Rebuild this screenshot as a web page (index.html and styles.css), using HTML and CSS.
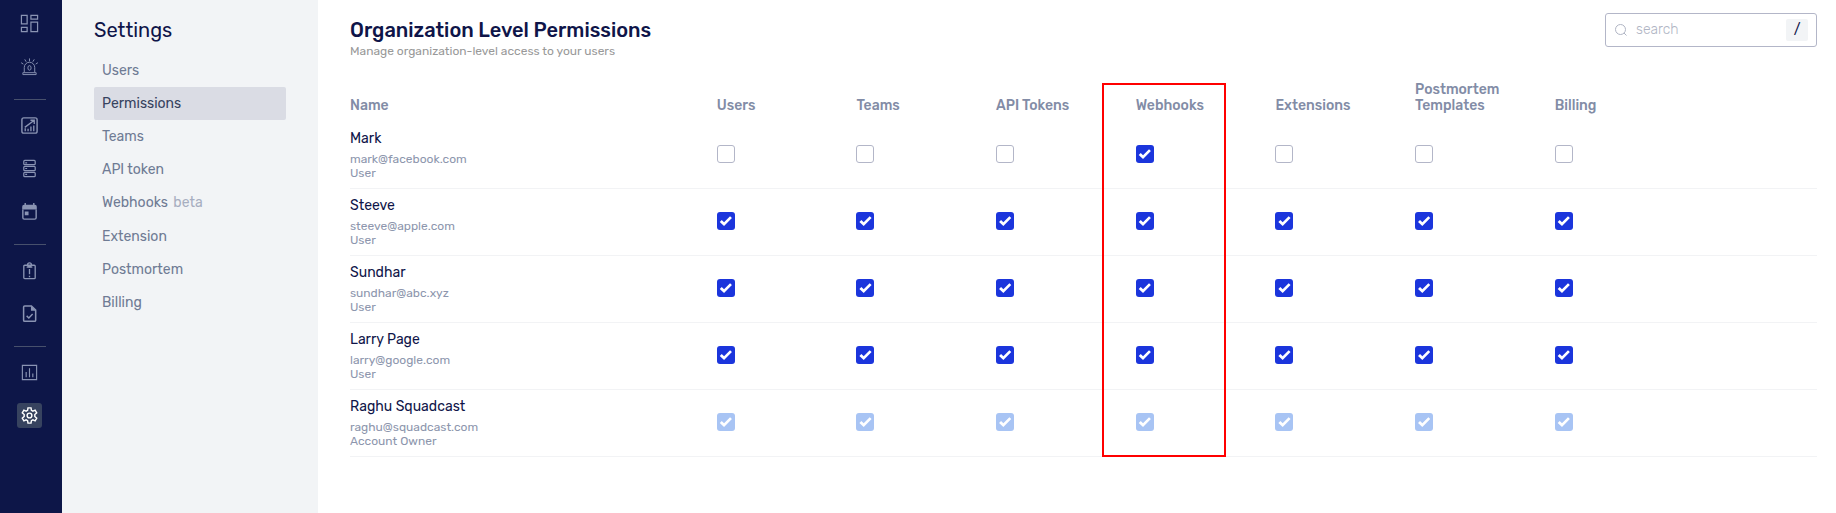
FILE: index.html
```html
<!DOCTYPE html>
<html lang="en">
<head>
<meta charset="utf-8">
<title>Organization Level Permissions</title>
<link rel="stylesheet" href="styles.css">
</head>
<body>
<div class="app">
  <nav class="rail" aria-label="Main">
    <a class="rail-link" href="#dashboard" aria-label="Dashboard"><svg class="icon" viewBox="0 0 20 20"><path d="M1.500 1.500h6v9h-6zM11.500 1.500h7v4h-7zM11.500 8.500h7v10h-7zM1.500 14h6v4.500h-6z" stroke-width="1.300"/></svg></a>
    <a class="rail-link" href="#incidents" aria-label="Incidents"><svg class="icon" viewBox="0 0 20 20"><path d="M4.500 16v-5a5.500 5.500 0 0 1 11 0v5M3 16.500h14v2H3zM10 4.500V1.500M6.500 5L5 2.500M13.500 5L15 2.500M3.500 7.500L1.200 6M16.500 7.500L18.800 6"/><ellipse cx="10" cy="11.500" rx="1.700" ry="2.400"/></svg></a>
    <hr class="rail-line">
    <a class="rail-link" href="#analytics" aria-label="Analytics"><svg class="icon" viewBox="0 0 20 20"><rect x="2" y="2" width="16" height="16" rx="2" stroke-width="1.500"/><path d="M5 12L15 4.500M11 4.500h4v4M5.500 13v3M8.500 13.500V16M11.500 11v5M14.500 10v6" stroke-width="1.400"/></svg></a>
    <a class="rail-link" href="#services" aria-label="Services"><svg class="icon" viewBox="0 0 20 20"><g stroke-width="1.300"><rect x="4" y="1.500" width="12" height="4.500" rx="1"/><rect x="4" y="7.700" width="12" height="4.500" rx="1"/><rect x="4" y="14" width="12" height="4.500" rx="1"/><path d="M5.500 4h2M5.500 10h2M5.500 16.300h2"/></g></svg></a>
    <a class="rail-link" href="#schedules" aria-label="Schedules"><svg class="icon" viewBox="0 0 20 20"><path d="M5.500 1v4M14.500 1v4M3 8v8.500a1.500 1.500 0 0 0 1.500 1.500h11a1.500 1.500 0 0 0 1.500-1.500V8" stroke-width="1.500"/><path class="solid" d="M2.300 5a2 2 0 0 1 2-2h11.400a2 2 0 0 1 2 2v3H2.300zM5 10h4v4H5z"/></svg></a>
    <hr class="rail-line">
    <a class="rail-link" href="#escalations" aria-label="Escalation policies"><svg class="icon" viewBox="0 0 20 20"><rect x="4" y="4.500" width="12" height="14" rx="1" stroke-width="1.400"/><circle cx="10" cy="4" r="2" stroke-width="1.500"/><path d="M7 6.500h6M10 8.500v5.500M10 15.500v1.500" stroke-width="1.400"/></svg></a>
    <a class="rail-link" href="#postmortems" aria-label="Postmortems"><svg class="icon" viewBox="0 0 20 20"><path d="M5 2h7l4.500 4.500v10.500a1.200 1.200 0 0 1-1.200 1.200H5A1.200 1.200 0 0 1 3.800 17V3.200A1.200 1.200 0 0 1 5 2z" stroke-width="1.600"/><path d="M7 12.500l2.300 2.300 4-4.300" stroke-width="1.500"/><path class="solid" d="M11.500 2v5h5z"/></svg></a>
    <hr class="rail-line">
    <a class="rail-link" href="#status" aria-label="Reports"><svg class="icon" viewBox="0 0 20 20"><path d="M2.500 2.500h15v15h-15zM6.500 15V9.500M10 15V5.500M13.500 15v-4" stroke-width="1.200"/></svg></a>
    <a class="rail-link rail-link-active" href="#settings" aria-label="Settings"><svg class="icon" viewBox="0 0 20 20"><path d="M8.400 2h3.200l.4 2.500 1.600.9 2.300-1 1.700 2.800-2 1.700v2.200l2 1.700-1.700 2.800-2.300-1-1.600.9-.4 2.500H8.400L8 15.500l-1.600-.9-2.300 1-1.700-2.800 2-1.700V8.900l-2-1.700 1.700-2.800 2.300 1L8 4.500z" stroke-width="1.500"/><circle cx="10" cy="10" r="2.500" stroke-width="1.500"/></svg></a>
  </nav>

  <aside class="side">
    <h2 class="side-title">Settings</h2>
    <nav class="menu" aria-label="Settings">
      <a class="menu-item" href="#users">Users</a>
      <a class="menu-item menu-item-active" href="#permissions" aria-current="page">Permissions</a>
      <a class="menu-item" href="#teams">Teams</a>
      <a class="menu-item" href="#api-token">API token</a>
      <a class="menu-item menu-item-tagged" href="#webhooks">Webhooks <span class="beta">beta</span></a>
      <a class="menu-item" href="#extension">Extension</a>
      <a class="menu-item" href="#postmortem">Postmortem</a>
      <a class="menu-item" href="#billing">Billing</a>
    </nav>
  </aside>

  <main class="main">
    <header class="head">
      <div class="head-text">
        <h1 class="title">Organization Level Permissions</h1>
        <p class="subtitle">Manage organization-level access to your users</p>
      </div>
      <label class="search">
        <svg class="search-icon" viewBox="0 0 14 14"><circle cx="6.500" cy="6.500" r="5"/><path d="M10 10L12.500 12.500"/></svg>
        <input class="search-input" type="search" placeholder="search" aria-label="Search">
        <kbd class="key">/</kbd>
      </label>
    </header>

    <div class="table-wrap">
      <table class="table">
        <colgroup><col class="col-name"><col class="col-perm" span="7"><col></colgroup>
        <thead>
          <tr><th scope="col">Name</th><th scope="col">Users</th><th scope="col">Teams</th><th scope="col">API Tokens</th><th scope="col">Webhooks</th><th scope="col">Extensions</th><th scope="col">Postmortem Templates</th><th scope="col">Billing</th><td></td></tr>
        </thead>
        <tbody>
          <tr>
            <td><div class="name">Mark</div><div class="meta">mark@facebook.com</div><div class="meta">User</div></td>
            <td><input class="check" type="checkbox" aria-label="Mark: Users"></td>
            <td><input class="check" type="checkbox" aria-label="Mark: Teams"></td>
            <td><input class="check" type="checkbox" aria-label="Mark: API Tokens"></td>
            <td><input class="check" type="checkbox" aria-label="Mark: Webhooks" checked></td>
            <td><input class="check" type="checkbox" aria-label="Mark: Extensions"></td>
            <td><input class="check" type="checkbox" aria-label="Mark: Postmortem Templates"></td>
            <td><input class="check" type="checkbox" aria-label="Mark: Billing"></td>
            <td></td>
          </tr>
          <tr>
            <td><div class="name">Steeve</div><div class="meta">steeve@apple.com</div><div class="meta">User</div></td>
            <td><input class="check" type="checkbox" aria-label="Steeve: Users" checked></td>
            <td><input class="check" type="checkbox" aria-label="Steeve: Teams" checked></td>
            <td><input class="check" type="checkbox" aria-label="Steeve: API Tokens" checked></td>
            <td><input class="check" type="checkbox" aria-label="Steeve: Webhooks" checked></td>
            <td><input class="check" type="checkbox" aria-label="Steeve: Extensions" checked></td>
            <td><input class="check" type="checkbox" aria-label="Steeve: Postmortem Templates" checked></td>
            <td><input class="check" type="checkbox" aria-label="Steeve: Billing" checked></td>
            <td></td>
          </tr>
          <tr>
            <td><div class="name">Sundhar</div><div class="meta">sundhar@abc.xyz</div><div class="meta">User</div></td>
            <td><input class="check" type="checkbox" aria-label="Sundhar: Users" checked></td>
            <td><input class="check" type="checkbox" aria-label="Sundhar: Teams" checked></td>
            <td><input class="check" type="checkbox" aria-label="Sundhar: API Tokens" checked></td>
            <td><input class="check" type="checkbox" aria-label="Sundhar: Webhooks" checked></td>
            <td><input class="check" type="checkbox" aria-label="Sundhar: Extensions" checked></td>
            <td><input class="check" type="checkbox" aria-label="Sundhar: Postmortem Templates" checked></td>
            <td><input class="check" type="checkbox" aria-label="Sundhar: Billing" checked></td>
            <td></td>
          </tr>
          <tr>
            <td><div class="name">Larry Page</div><div class="meta">larry@google.com</div><div class="meta">User</div></td>
            <td><input class="check" type="checkbox" aria-label="Larry Page: Users" checked></td>
            <td><input class="check" type="checkbox" aria-label="Larry Page: Teams" checked></td>
            <td><input class="check" type="checkbox" aria-label="Larry Page: API Tokens" checked></td>
            <td><input class="check" type="checkbox" aria-label="Larry Page: Webhooks" checked></td>
            <td><input class="check" type="checkbox" aria-label="Larry Page: Extensions" checked></td>
            <td><input class="check" type="checkbox" aria-label="Larry Page: Postmortem Templates" checked></td>
            <td><input class="check" type="checkbox" aria-label="Larry Page: Billing" checked></td>
            <td></td>
          </tr>
          <tr>
            <td><div class="name">Raghu Squadcast</div><div class="meta">raghu@squadcast.com</div><div class="meta">Account Owner</div></td>
            <td><input class="check" type="checkbox" aria-label="Raghu Squadcast: Users" checked disabled></td>
            <td><input class="check" type="checkbox" aria-label="Raghu Squadcast: Teams" checked disabled></td>
            <td><input class="check" type="checkbox" aria-label="Raghu Squadcast: API Tokens" checked disabled></td>
            <td><input class="check" type="checkbox" aria-label="Raghu Squadcast: Webhooks" checked disabled></td>
            <td><input class="check" type="checkbox" aria-label="Raghu Squadcast: Extensions" checked disabled></td>
            <td><input class="check" type="checkbox" aria-label="Raghu Squadcast: Postmortem Templates" checked disabled></td>
            <td><input class="check" type="checkbox" aria-label="Raghu Squadcast: Billing" checked disabled></td>
            <td></td>
          </tr>
        </tbody>
      </table>
      <div class="highlight"></div>
    </div>
  </main>
</div>
</body>
</html>
```
FILE: styles.css
```css
* { box-sizing: border-box; }

body {
  margin: 0;
  background: #fff;
  color: #0f1549;
  font-family: Rubik, Roboto, "Liberation Sans", sans-serif;
  font-size: 14px;
}

a { text-decoration: none; }

.app { display: flex; min-height: 100vh; }

/* Icon rail */
.rail {
  flex: none;
  width: 62px;
  padding: 11px 3px 0 0;
  display: flex;
  flex-direction: column;
  align-items: center;
  gap: 18px;
  background: #0d1648;
}
.rail-link {
  width: 25px;
  height: 25px;
  display: flex;
  align-items: center;
  justify-content: center;
  border-radius: 3px;
  color: #8a94b3;
}
.rail-link-active { background: #37435f; color: #fff; }
.rail-line {
  width: 32px;
  height: 1px;
  margin: 2px 0 -5px;
  border: 0;
  background: #47506c;
}
.icon { width: 19px; height: 19px; fill: none; stroke: currentColor; stroke-width: 1; }
.icon .solid { fill: currentColor; stroke: none; }

/* Settings menu */
.side {
  flex: none;
  width: 256px;
  padding: 18px 32px 0;
  background: #f2f4f6;
}
.side-title { margin: 0 0 12px; font-size: 20px; line-height: 24px; font-weight: 400; }
.menu { display: flex; flex-direction: column; }
.menu-item {
  padding: 0 8px;
  border-radius: 2px;
  line-height: 33px;
  color: #6f7b94;
}
.menu-item-active { background: #dadce4; color: #37435f; }
.menu-item-tagged { padding-bottom: 1px; }
.beta { margin-left: 2px; color: #a7aec0; }

/* Content */
.main { flex: 1; min-width: 0; padding: 13px 19px 0 32px; }
.head { display: flex; justify-content: space-between; align-items: flex-start; }
.head-text { padding-top: 5px; }
.title { margin: 0; font-size: 20px; line-height: 24px; font-weight: 500; }
.subtitle { margin: 0; font-size: 12px; line-height: 18px; color: #999; }

.search {
  width: 212px;
  height: 34px;
  padding: 0 8px;
  display: flex;
  align-items: center;
  gap: 8px;
  border: 1px solid #b3b6c8;
  border-radius: 3px;
}
.search-icon { flex: none; width: 14px; height: 14px; fill: none; stroke: #b0b5c4; stroke-width: 1; }
.search-input {
  flex: 1;
  min-width: 0;
  padding: 0;
  border: 0;
  outline: 0;
  background: none;
  font: 300 14px/20px Rubik, Roboto, sans-serif;
  color: #0f1549;
}
.search-input::placeholder { color: #b0b5c4; }
.key {
  width: 22px;
  border-radius: 2px;
  background: #f2f4f6;
  font: 400 14px/22px Rubik, Roboto, sans-serif;
  text-align: center;
}

.table-wrap { position: relative; margin-top: 22px; }
.table { width: 100%; table-layout: fixed; border-spacing: 0; }
.col-name { width: 25%; }
.col-perm { width: 9.52%; }
.table th {
  padding: 0 24px 8px 0;
  vertical-align: bottom;
  text-align: left;
  font-weight: 500;
  line-height: 16px;
  color: #828ca6;
}
.table tbody td {
  padding: 6px 0 8px;
  border-bottom: 1px solid #f2f3f5;
  vertical-align: middle;
}
.name { margin-bottom: 2px; line-height: 22px; }
.meta { font-size: 12px; line-height: 14px; color: #8d96ad; }

.check {
  appearance: none;
  display: block;
  width: 18px;
  height: 18px;
  margin: 0;
  border: 1px solid #b3b6c8;
  border-radius: 3px;
  background: #fff;
}
.check:checked { border: 0; background: #1b35dc; }
.check:checked:disabled { background: #a8c4f4; }
.check:checked::before {
  content: "";
  display: block;
  width: 18px;
  height: 18px;
  background: #fff;
  clip-path: path("M3 10L5 8L7.300 10.300L13.300 4.200L15.200 6L7.300 14Z");
}

/* Outline around the Webhooks column */
.highlight {
  position: absolute;
  top: 1px;
  bottom: 0;
  left: calc(53.5% - 33px);
  width: 124px;
  border: 2px solid #f00;
  pointer-events: none;
}
```
